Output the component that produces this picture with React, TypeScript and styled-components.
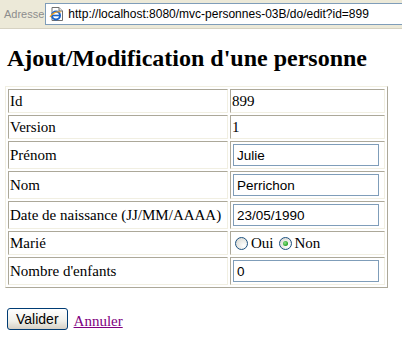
import React, { useState } from 'react'
import styled, { createGlobalStyle } from 'styled-components'

const GlobalStyle = createGlobalStyle`
  html, body {
    margin: 0;
    padding: 0;
    background: #ffffff;
  }
  body {
    font-family: "Liberation Serif", "Times New Roman", serif;
    font-size: 15px;
    color: #000;
  }
`

const AddressBar = styled.div`
  display: flex;
  align-items: center;
  height: 29px;
  padding: 0 0 0 4px;
  background: #ece9d8;
  border-bottom: 1px solid #d6d2c2;
  box-sizing: border-box;
`
const AddressLabel = styled.span`
  font-family: "Liberation Sans", Arial, sans-serif;
  font-size: 11px;
  color: #8d8d8d;
  margin-right: 1px;
  white-space: nowrap;
`
const AddressField = styled.div`
  flex: 1;
  display: flex;
  align-items: center;
  gap: 3px;
  height: 22px;
  padding-left: 3px;
  background: #fff;
  border: 1px solid #7f9db9;
  border-right: none;
  box-sizing: border-box;
`
const Url = styled.span`
  font-family: "Liberation Sans", Arial, sans-serif;
  font-size: 12px;
  color: #000;
`

const Page = styled.div`
  padding: 0 5px;
`
const Heading = styled.h2`
  font-size: 24px;
  font-weight: bold;
  margin: 16px 0 14px 2px;
`
const Table = styled.table`
  border-collapse: separate;
  border-spacing: 2px;
  width: 383px;
  border: 1px solid;
  border-color: #f1efe2 #aca899 #aca899 #f1efe2;
`
const Cell = styled.td<{ $wide?: boolean }>`
  padding: 1px;
  border: 1px solid;
  border-color: #aca899 #f1efe2 #f1efe2 #aca899;
  width: ${p => (p.$wide ? '216px' : 'auto')};
  line-height: 20px;
  white-space: nowrap;
`
const TextInput = styled.input`
  display: block;
  width: 146px;
  height: 22px;
  box-sizing: border-box;
  margin: 1px 0 1px 1px;
  padding: 1px 3px;
  border: 1px solid #7f9db9;
  font-family: "Liberation Sans", Arial, sans-serif;
  font-size: 13.5px;
  color: #000;
  outline: none;
`
const RadioGroup = styled.div`
  display: flex;
  align-items: center;
  padding-left: 3px;
`
const RadioLabel = styled.label`
  display: inline-flex;
  align-items: center;
  gap: 3px;
  margin-right: 5px;
  cursor: pointer;
`
const Radio = styled.input`
  appearance: none;
  width: 13px;
  height: 13px;
  margin: 0;
  border-radius: 50%;
  border: 1px solid #1c5180;
  background: radial-gradient(circle at 70% 70%, #ffffff 0%, #dcdcd6 80%);
  box-sizing: border-box;
  position: relative;
  &:checked::after {
    content: '';
    position: absolute;
    left: 3px;
    top: 3px;
    width: 5px;
    height: 5px;
    border-radius: 50%;
    background: radial-gradient(circle at 40% 40%, #8fe38a 0%, #21a121 70%);
  }
`
const Actions = styled.div`
  display: flex;
  align-items: center;
  gap: 6px;
  margin-top: 20px;
  padding-left: 2px;
`
const Button = styled.button`
  height: 22px;
  padding: 0 8px;
  border: 1px solid #003c74;
  border-radius: 3px;
  background: linear-gradient(#ffffff, #f0f0ea 60%, #d6d0c5);
  font-family: "Liberation Sans", Arial, sans-serif;
  font-size: 14px;
  color: #000;
`
const Link = styled.a`
  color: #800080;
  text-decoration: underline;
  font-size: 15px;
  margin-top: 4px;
`

const PageIcon = () => (
  <svg width="16" height="16" viewBox="0 0 16 16">
    <path d="M3 1.5h7l3.5 3.5v9.5H3z" fill="#fff" stroke="#6f6f6f" />
    <path d="M10 1.5v3.5h3.5" fill="#e8e8e8" stroke="#6f6f6f" />
    <circle cx="7" cy="9.5" r="4" fill="none" stroke="#1a63c9" strokeWidth="2" />
    <path d="M3.5 9.5h7" stroke="#1a63c9" strokeWidth="1.6" />
    <path d="M1 11c2-4 7-6 11-5" fill="none" stroke="#f0a020" strokeWidth="1.2" />
  </svg>
)

const App = () => {
  const [prenom, setPrenom] = useState('Julie')
  const [nom, setNom] = useState('Perrichon')
  const [dateNaissance, setDateNaissance] = useState('23/05/1990')
  const [marie, setMarie] = useState(false)
  const [enfants, setEnfants] = useState('0')

  return (
    <>
      <GlobalStyle />
      <AddressBar>
        <AddressLabel>Adresse</AddressLabel>
        <AddressField>
          <PageIcon />
          <Url>http://localhost:8080/mvc-personnes-03B/do/edit?id=899</Url>
        </AddressField>
      </AddressBar>
      <Page>
        <Heading>Ajout/Modification d'une personne</Heading>
        <form onSubmit={e => { e.preventDefault() }}>
          <Table>
            <tbody>
              <tr>
                <Cell $wide>Id</Cell>
                <Cell>899</Cell>
              </tr>
              <tr>
                <Cell $wide>Version</Cell>
                <Cell>1</Cell>
              </tr>
              <tr>
                <Cell $wide>Prénom</Cell>
                <Cell><TextInput value={prenom} onChange={e => { setPrenom(e.currentTarget.value) }} /></Cell>
              </tr>
              <tr>
                <Cell $wide>Nom</Cell>
                <Cell><TextInput value={nom} onChange={e => { setNom(e.currentTarget.value) }} /></Cell>
              </tr>
              <tr>
                <Cell $wide>Date de naissance (JJ/MM/AAAA)</Cell>
                <Cell><TextInput value={dateNaissance} onChange={e => { setDateNaissance(e.currentTarget.value) }} /></Cell>
              </tr>
              <tr>
                <Cell $wide>Marié</Cell>
                <Cell>
                  <RadioGroup>
                    <RadioLabel>
                      <Radio type="radio" name="marie" checked={marie} onChange={() => { setMarie(true) }} />Oui
                    </RadioLabel>
                    <RadioLabel>
                      <Radio type="radio" name="marie" checked={!marie} onChange={() => { setMarie(false) }} />Non
                    </RadioLabel>
                  </RadioGroup>
                </Cell>
              </tr>
              <tr>
                <Cell $wide>Nombre d'enfants</Cell>
                <Cell><TextInput value={enfants} onChange={e => { setEnfants(e.currentTarget.value) }} /></Cell>
              </tr>
            </tbody>
          </Table>
          <Actions>
            <Button type="submit">Valider</Button>
            <Link href="#">Annuler</Link>
          </Actions>
        </form>
      </Page>
    </>
  )
}

export default App
